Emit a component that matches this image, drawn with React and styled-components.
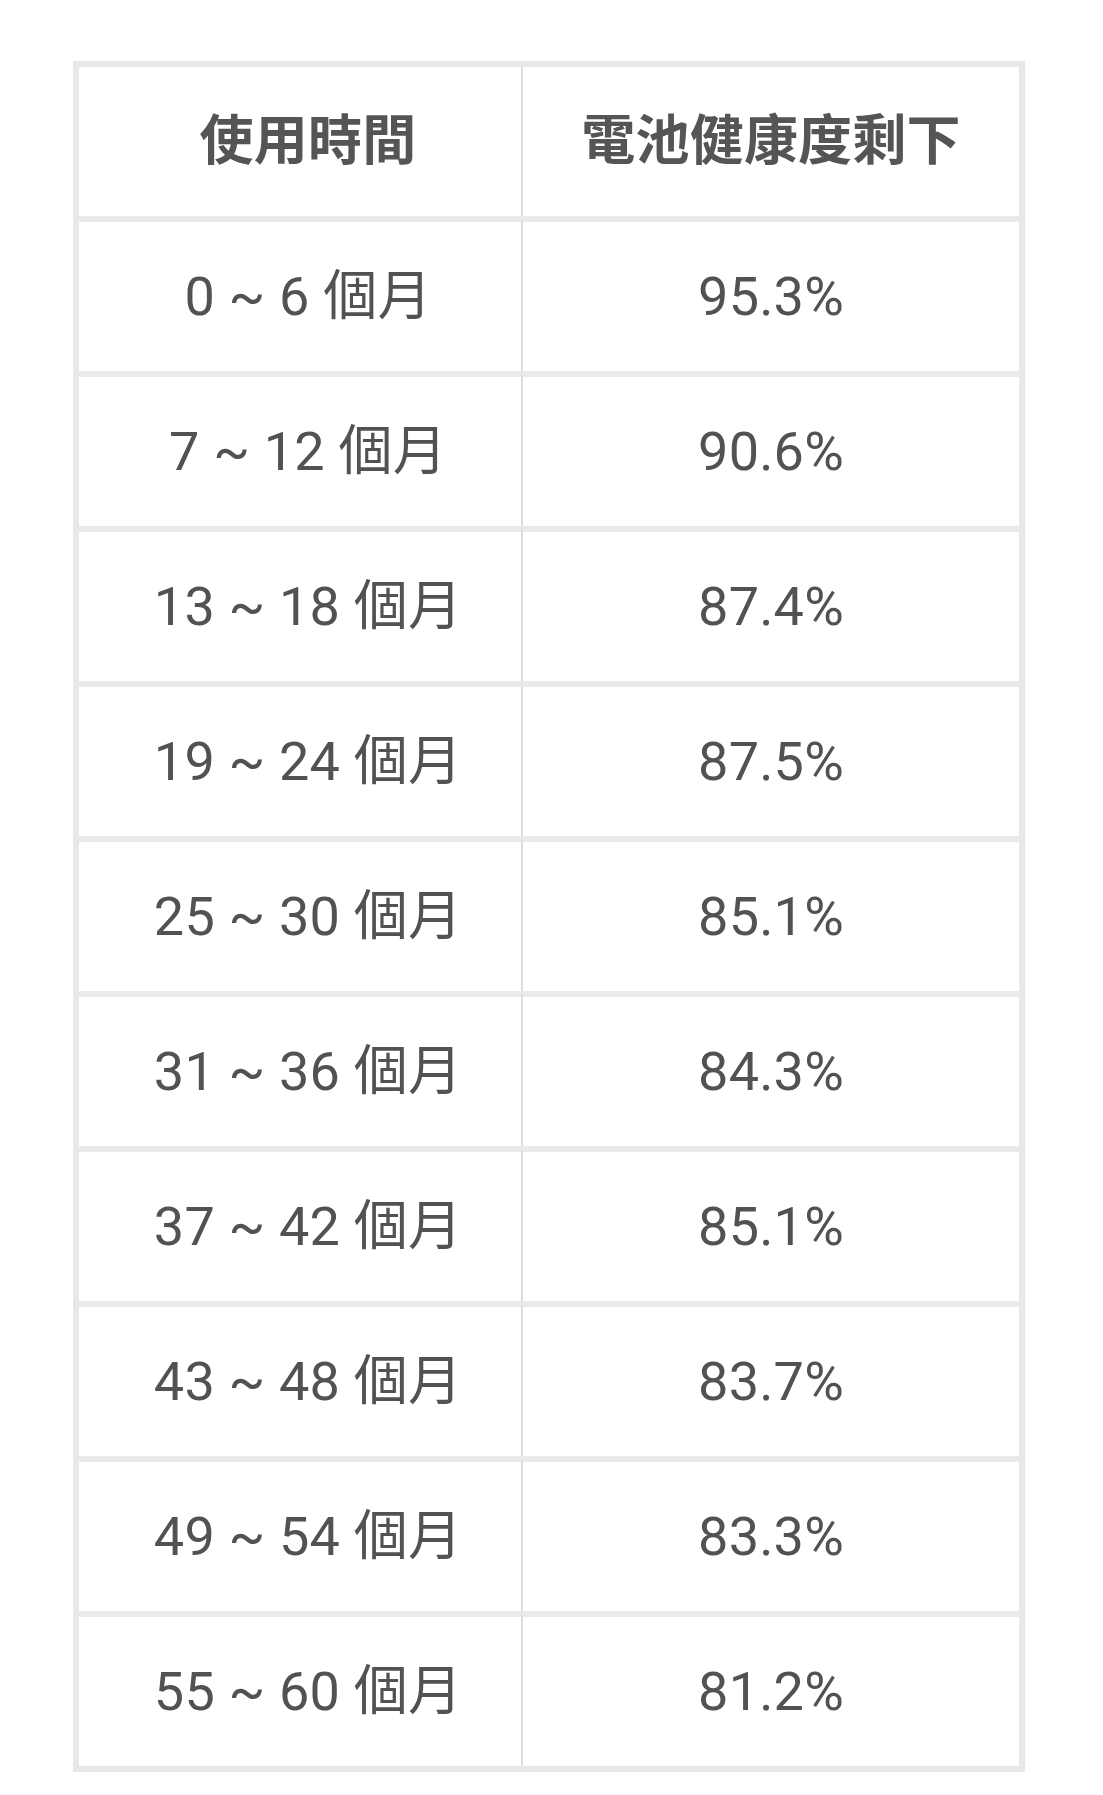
import React from 'react';
import styled, { createGlobalStyle } from 'styled-components';

const rows = [
  ['0 ~ 6 個月', '95.3%'],
  ['7 ~ 12 個月', '90.6%'],
  ['13 ~ 18 個月', '87.4%'],
  ['19 ~ 24 個月', '87.5%'],
  ['25 ~ 30 個月', '85.1%'],
  ['31 ~ 36 個月', '84.3%'],
  ['37 ~ 42 個月', '85.1%'],
  ['43 ~ 48 個月', '83.7%'],
  ['49 ~ 54 個月', '83.3%'],
  ['55 ~ 60 個月', '81.2%'],
];

const App = () => {
  return (
    <Page>
      <GlobalStyle />
      <Table>
        <colgroup>
          <col style={{ width: 442 }} />
          <col style={{ width: 498 }} />
        </colgroup>
        <thead>
          <tr>
            <HeadCell>使用時間</HeadCell>
            <HeadCell>電池健康度剩下</HeadCell>
          </tr>
        </thead>
        <tbody>
          {rows.map(([period, health]) => (
            <tr key={period}>
              <Cell>{period}</Cell>
              <Cell>{health}</Cell>
            </tr>
          ))}
        </tbody>
      </Table>
    </Page>
  );
};
export default App;

const GlobalStyle = createGlobalStyle`
  html, body {
    margin: 0;
    padding: 0;
    background: #ffffff;
  }
  body {
    font-family: Roboto, "Noto Sans CJK TC", "Noto Sans", sans-serif;
  }
`;

const Page = styled.div`
  padding: 61px 0 20px 73px;
`;

const Table = styled.table`
  width: 952px;
  table-layout: fixed;
  border-collapse: separate;
  border-spacing: 0;
  border: 6px solid #e8e8e8;
  background: #ffffff;

  tr + tr > td,
  tbody tr:first-child > td {
    border-top: 6px solid #eaeaea;
  }
`;

const cellBase = `
  height: 149px;
  padding: 0;
  text-align: center;
  vertical-align: middle;
  color: #525252;
  font-size: 54px;
  line-height: 1;
  white-space: nowrap;
  letter-spacing: 0.2px;

  &:first-child {
    padding-left: 16px;
  }

  & + & {
    border-left: 2px solid #dddddd;
  }
`;

const HeadCell = styled.th`
  ${cellBase}
  font-weight: 700;
  color: #555555;
`;

const Cell = styled.td`
  ${cellBase}
  font-weight: 400;
`;
